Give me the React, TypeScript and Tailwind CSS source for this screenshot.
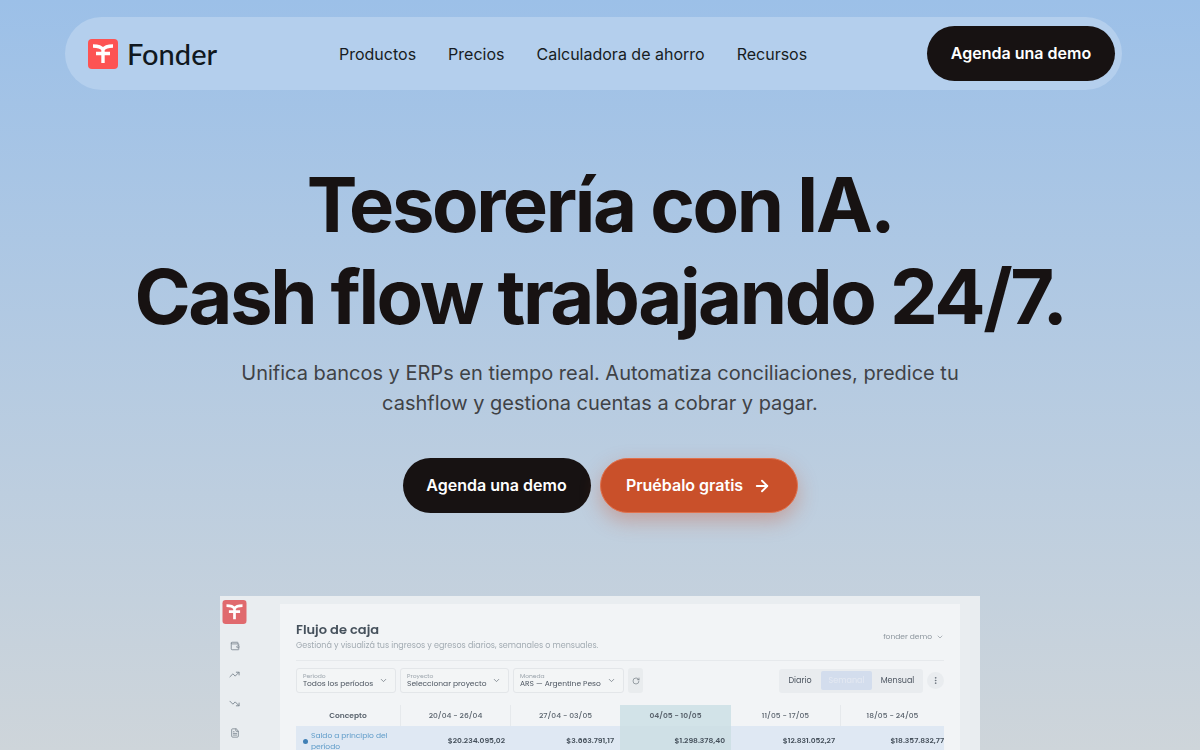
import { ChevronDown, ArrowRight, RotateCw, EllipsisVertical, Wallet, TrendingUp, TrendingDown, FileText } from "lucide-react";

function Mark({ className }: { className: string }) {
  return (
    <svg viewBox="0 0 30 30" className={className}>
      <rect width="30" height="30" rx="4" fill="currentColor" />
      <path d="M5 7c4 0 8 .5 10 3.500 2-3 6-3.500 10-3.500M8 14.500h14M15 10v14" stroke="#fff" strokeWidth="3.400" fill="none" />
    </svg>
  );
}

function Select({ label, value, w }: { label: string; value: string; w: string }) {
  return (
    <div className={`${w} h-[25px] border border-[#e3e6e9] rounded-[3px] flex items-center justify-between pl-[6px] pr-[7px] bg-[#f3f5f6]`}>
      <div className="flex flex-col leading-none">
        <span className="text-[6px] text-[#9aa3ab]">{label}</span>
        <span className="text-[7.500px] text-[#4c5560] mt-[1px]">{value}</span>
      </div>
      <ChevronDown className="w-[9px] h-[9px] text-[#6f7880]" />
    </div>
  );
}

function Cell({ children, className = "" }: { children: string; className?: string }) {
  return <div className={`flex items-center justify-end pr-[6px] text-[7.500px] font-semibold text-[#46515c] ${className}`}>{children}</div>;
}

function Head({ children, className = "" }: { children: string; className?: string }) {
  return <div className={`flex items-center justify-center text-[7.500px] font-medium text-[#5a636d] border-r border-[#e6e9ec] ${className}`}>{children}</div>;
}

export default function App() {
  return (
    <div className="w-[1200px] h-[750px] overflow-hidden flex flex-col items-center bg-gradient-to-b from-[#9cc0e8] to-[#ced5da] font-['Inter',sans-serif] text-[#171212]">
      <div className="mt-[17px] ml-[-13px] w-[1057px] h-[73px] shrink-0 rounded-full bg-[#b4cfed] flex items-center pl-[23px] pr-[7px]">
        <div className="w-[251px] flex items-center gap-[9px] shrink-0 text-[#fd5353]">
          <Mark className="w-[30px] h-[30px]" />
          <span className="font-['Lato',sans-serif] font-medium text-[29px] leading-none text-[#101820]">Fonder</span>
        </div>
        <nav className="flex gap-[32px] text-[16px] text-[#171c22]">
          <span>Productos</span>
          <span>Precios</span>
          <span>Calculadora de ahorro</span>
          <span>Recursos</span>
        </nav>
        <button className="ml-auto w-[188px] h-[55px] pb-[2px] rounded-full bg-[#171212] text-white text-[16px] font-semibold">Agenda una demo</button>
      </div>

      <h1 className="mt-[68px] text-[76px] leading-[92px] font-bold tracking-[-0.032em] text-center whitespace-nowrap">
        Tesorería con IA.
        <br />
        Cash flow trabajando 24/7.
      </h1>
      <p className="mt-[16px] w-[760px] text-center text-[20px] leading-[30px] text-[#3f4246]">
        Unifica bancos y ERPs en tiempo real. Automatiza conciliaciones, predice tu cashflow y gestiona cuentas a cobrar y pagar.
      </p>
      <div className="mt-[40px] flex gap-[9px] shrink-0">
        <button className="w-[188px] h-[55px] pb-[2px] rounded-full bg-[#171212] text-white text-[16px] font-semibold">Agenda una demo</button>
        <button className="w-[198px] h-[55px] rounded-full bg-[#c9502a] border border-[#e0704c] text-white text-[16px] font-semibold flex items-center justify-center gap-[10px] shadow-[0_8px_20px_rgba(201,80,42,0.35)]">
          <span className="pb-[2px]">Pruébalo gratis</span> <ArrowRight className="w-[18px] h-[18px]" strokeWidth={2.500} />
        </button>
      </div>

      <div className="mt-[83px] w-[760px] h-[300px] shrink-0 bg-[#e9edf0] flex items-start blur-[0.6px] font-['Poppins','Inter',sans-serif]">
        <div className="w-[29px] mt-[4px] flex flex-col items-center text-[#e06a6e] shrink-0">
          <Mark className="w-[25px] h-[24px]" />
          <Wallet className="mt-[17px] w-[10px] h-[10px] text-[#7c8790]" />
          <TrendingUp className="mt-[18px] w-[11px] h-[11px] text-[#7c8790]" />
          <TrendingDown className="mt-[18px] w-[11px] h-[11px] text-[#7c8790]" />
          <FileText className="mt-[19px] w-[10px] h-[10px] text-[#7c8790]" />
        </div>
        <div className="ml-[31px] mt-[8px] w-[680px] h-[300px] bg-[#f2f4f6] px-[16px] pt-[17px] shrink-0">
          <div className="h-[17px] flex justify-between items-start">
            <div className="text-[13px] leading-[17px] font-semibold text-[#46515c]">Flujo de caja</div>
            <div className="flex items-center gap-[4px] text-[7.500px] text-[#8c959d] mt-[10px]">fonder demo <ChevronDown className="w-[8px] h-[8px]" /></div>
          </div>
          <div className="text-[8px] leading-[10px] mt-[3px] text-[#a2abb2]">Gestioná y visualizá tus ingresos y egresos diarios, semanales o mensuales.</div>
          <div className="mt-[9px] border-t border-[#e6e9ec] pt-[7px] flex items-center gap-[4px]">
            <Select label="Período" value="Todos los períodos" w="w-[100px]" />
            <Select label="Proyecto" value="Seleccionar proyecto" w="w-[109px]" />
            <Select label="Moneda" value="ARS — Argentine Peso" w="w-[111px]" />
            <div className="w-[15px] h-[25px] bg-[#e9ecee] rounded-[3px] flex items-center justify-center">
              <RotateCw className="w-[8px] h-[8px] text-[#6f7880]" />
            </div>
            <div className="ml-auto flex items-center gap-[4px]">
              <div className="h-[24px] bg-[#e9ecef] rounded-[3px] flex items-center text-[8px] text-[#4c5560]">
                <span className="w-[42px] text-center">Diario</span>
                <span className="w-[51px] h-[19px] bg-[#d3dded] rounded-[2px] flex items-center justify-center text-[#e4e9f2]">Semanal</span>
                <span className="w-[51px] text-center">Mensual</span>
              </div>
              <div className="w-[17px] h-[17px] rounded-full bg-[#e9ecef] flex items-center justify-center">
                <EllipsisVertical className="w-[9px] h-[9px] text-[#5c6570]" />
              </div>
            </div>
          </div>
          <div className="mt-[12px] grid grid-cols-[105px_110px_109px_111px_110px_103px] grid-rows-[21px_auto]">
            <Head className="font-semibold">Concepto</Head>
            <Head>20/04 - 26/04</Head>
            <Head className="border-r-0">27/04 - 03/05</Head>
            <Head className="bg-[#d2e3e8] border-r-0 font-semibold">04/05 - 10/05</Head>
            <Head>11/05 - 17/05</Head>
            <Head className="border-r-0">18/05 - 24/05</Head>
            <div className="h-[30px] bg-[#dfe8f3] flex items-center gap-[3px] pl-[7px]">
              <span className="w-[5px] h-[5px] rounded-full bg-[#3f7fb5] shrink-0" />
              <span className="text-[7.500px] leading-[11px] text-[#5f9cc9]">Saldo a principio del período</span>
            </div>
            <Cell className="bg-[#dfe8f3]">$20.234.095,02</Cell>
            <Cell className="bg-[#dfe8f3]">$3.663.791,17</Cell>
            <Cell className="bg-[#cfe0e6]">$1.298.378,40</Cell>
            <Cell className="bg-[#dfe8f3]">$12.831.052,27</Cell>
            <Cell className="bg-[#dfe8f3] !pr-0">$18.357.832,77</Cell>
          </div>
        </div>
      </div>
    </div>
  );
}
